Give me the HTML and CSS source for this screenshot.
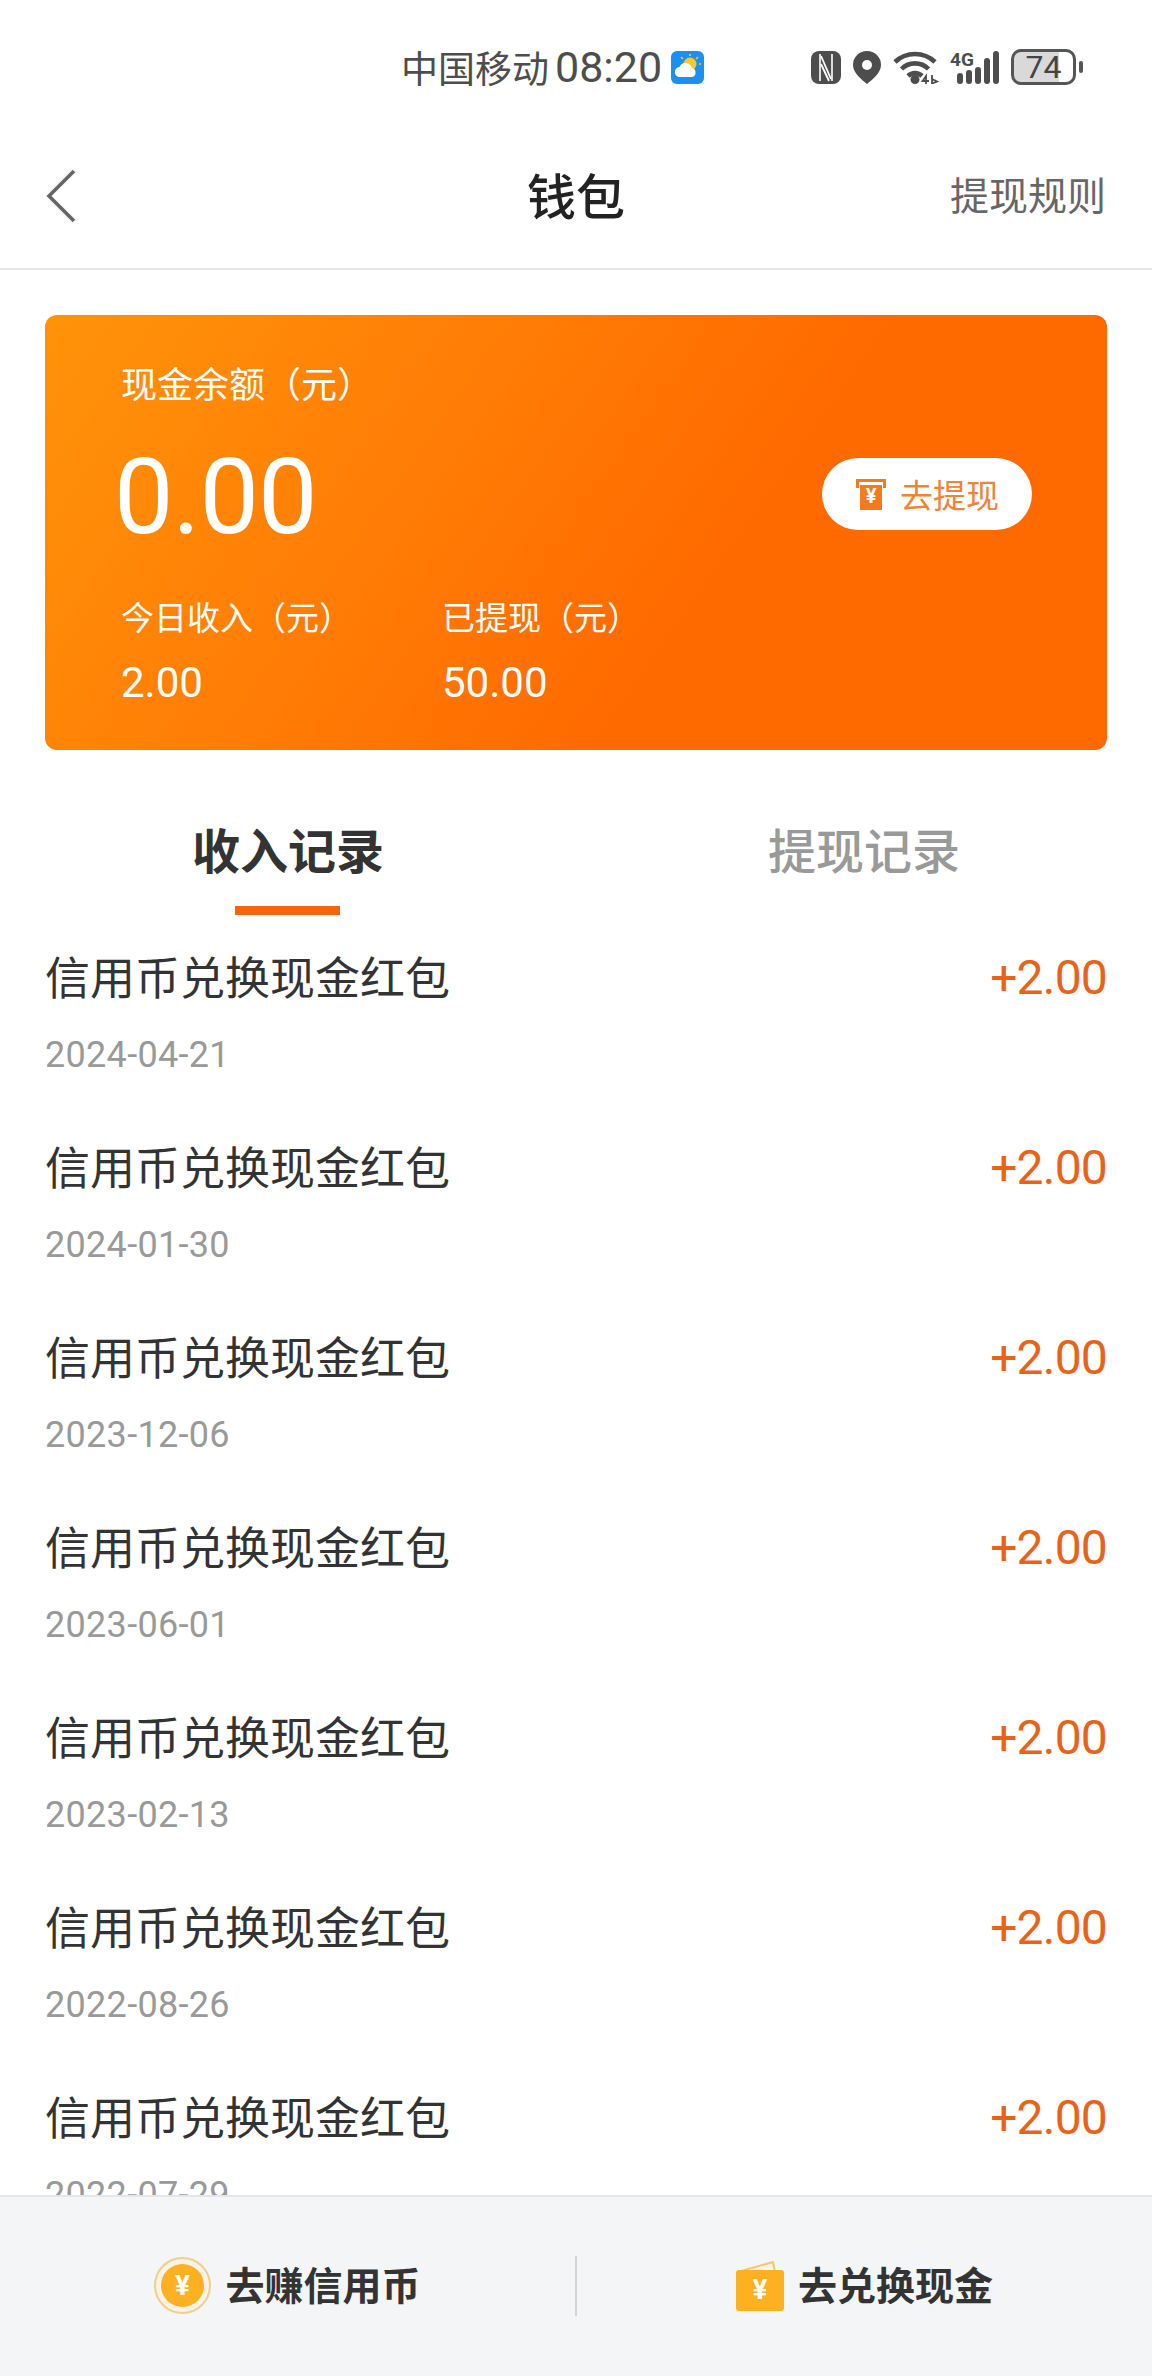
FILE: index.html
```html
<!DOCTYPE html>
<html lang="zh-CN">
<head>
    <meta charset="UTF-8">
    <meta name="viewport" content="width=device-width, initial-scale=1.0">
    <title>钱包</title>
    <link rel="stylesheet" href="styles.css">
</head>
<body>
    <div class="status-bar">
        <div class="status-left">
            <span class="carrier">中国移动</span>
            <span class="clock">08:20</span>
            <svg class="weather" width="33" height="33" viewBox="0 0 33 33">
                <rect width="33" height="33" rx="6" fill="#1c8ff0"/>
                <circle cx="19" cy="13" r="6.5" fill="#ffc62e"/>
                <path d="M19 3v2M27 6l-2 2M10 6l2 2M30 13h-2" stroke="#ffc62e" stroke-width="1.6" fill="none"/>
                <path d="M9 26a5 5 0 0 1-.5-10 6.5 6.5 0 0 1 12.3 1A4.6 4.6 0 0 1 21 26z" fill="#fff"/>
            </svg>
        </div>
        <div class="status-right">
            <svg class="nfc" width="30" height="33" viewBox="0 0 30 33">
                <rect width="30" height="33" rx="8" fill="#4d4d4d"/>
                <path d="M9 3v27M21 3v27" stroke="#fff" stroke-width="1.6" fill="none"/>
                <path d="M10 5l10 23M10 13l8 17" stroke="#fff" stroke-width="1.8" fill="none"/>
            </svg>
            <svg class="pin" width="28" height="33" viewBox="0 0 28 33">
                <path d="M14 0a14 14 0 0 1 14 14c0 8-9 15-14 19C9 29 0 22 0 14A14 14 0 0 1 14 0z" fill="#4d4d4d"/>
                <circle cx="14" cy="14" r="5" fill="#fff"/>
            </svg>
            <svg class="wifi" width="46" height="34" viewBox="0 0 46 34">
                <path d="M2 12a29 29 0 0 1 40 0M8.500 19a19 19 0 0 1 27 0M15 26a10 10 0 0 1 14 0" stroke="#4d4d4d" stroke-width="4.600" fill="none"/>
                <circle cx="22" cy="29.500" r="4.500" fill="#4d4d4d"/>
                <path d="M33 34v-8l-3.500 5H36M39 25v9M39 29l5 2.500-5 2" stroke="#4d4d4d" stroke-width="1.800" fill="none"/>
            </svg>
            <div class="signal">
                <span class="net">4G</span>
                <svg width="42" height="33" viewBox="0 0 42 33">
                    <g fill="#4d4d4d">
                        <rect x="0" y="22" width="6" height="11" rx="3"/>
                        <rect x="9" y="19" width="6" height="14" rx="3"/>
                        <rect x="18" y="16" width="6" height="17" rx="3"/>
                        <rect x="27" y="7" width="6" height="26" rx="3"/>
                        <rect x="36" y="0" width="6" height="33" rx="3"/>
                    </g>
                </svg>
            </div>
            <div class="battery">
                <div class="battery-body"><span>74</span></div>
                <div class="battery-cap"></div>
            </div>
        </div>
    </div>

    <header class="topbar">
        <svg class="back" width="30" height="54" viewBox="0 0 30 54">
            <path d="M28 2L3 27l25 25" stroke="#666" stroke-width="3.600" fill="none"/>
        </svg>
        <h1>钱包</h1>
        <a class="rules">提现规则</a>
    </header>

    <section class="card">
        <div class="card-main">
            <div>
                <p class="card-label">现金余额（元）</p>
                <p class="balance">0.00</p>
            </div>
            <button class="withdraw">
                <svg width="32" height="32" viewBox="0 0 32 32">
                    <path d="M1 1h30v9h-3V4H4v6H1z" fill="#f47a1c"/>
                    <path d="M5 7h22v25H5z" fill="#f47a1c"/>
                    <text x="16" y="25" class="yen-small">¥</text>
                </svg>
                去提现
            </button>
        </div>
        <div class="card-stats">
            <div class="stat">
                <p class="stat-label">今日收入（元）</p>
                <p class="stat-value">2.00</p>
            </div>
            <div class="stat">
                <p class="stat-label">已提现（元）</p>
                <p class="stat-value">50.00</p>
            </div>
        </div>
    </section>

    <nav class="tabs">
        <div class="tab active">收入记录</div>
        <div class="tab">提现记录</div>
    </nav>

    <ul class="records">
        <li class="record">
            <div><p class="record-title">信用币兑换现金红包</p><p class="record-date">2024-04-21</p></div>
            <span class="record-amount">+2.00</span>
        </li>
        <li class="record">
            <div><p class="record-title">信用币兑换现金红包</p><p class="record-date">2024-01-30</p></div>
            <span class="record-amount">+2.00</span>
        </li>
        <li class="record">
            <div><p class="record-title">信用币兑换现金红包</p><p class="record-date">2023-12-06</p></div>
            <span class="record-amount">+2.00</span>
        </li>
        <li class="record">
            <div><p class="record-title">信用币兑换现金红包</p><p class="record-date">2023-06-01</p></div>
            <span class="record-amount">+2.00</span>
        </li>
        <li class="record">
            <div><p class="record-title">信用币兑换现金红包</p><p class="record-date">2023-02-13</p></div>
            <span class="record-amount">+2.00</span>
        </li>
        <li class="record">
            <div><p class="record-title">信用币兑换现金红包</p><p class="record-date">2022-08-26</p></div>
            <span class="record-amount">+2.00</span>
        </li>
        <li class="record">
            <div><p class="record-title">信用币兑换现金红包</p><p class="record-date">2022-07-29</p></div>
            <span class="record-amount">+2.00</span>
        </li>
    </ul>

    <footer class="bottom">
        <a class="bottom-btn">
            <svg width="57" height="57" viewBox="0 0 57 57">
                <circle cx="28.500" cy="28.500" r="27.500" fill="#f8f3e6" stroke="#f0cf8e" stroke-width="2"/>
                <circle cx="28.500" cy="28.500" r="21.500" fill="#fdb022"/>
                <text x="28.500" y="38" class="yen">¥</text>
            </svg>
            <span class="bottom-text">去赚信用币</span>
        </a>
        <div class="bottom-divider"></div>
        <a class="bottom-btn">
            <svg width="48" height="50" viewBox="0 0 48 50">
                <path d="M2 11L37 1l2 10" fill="#f8f3e6" stroke="#f3c673" stroke-width="2"/>
                <rect y="9" width="48" height="41" rx="3" fill="#fdb022"/>
                <text x="24" y="38" class="yen">¥</text>
            </svg>
            <span class="bottom-text">去兑换现金</span>
        </a>
    </footer>
</body>
</html>
```

FILE: styles.css
```css
* {
    margin: 0;
    padding: 0;
    box-sizing: border-box;
}
html, body {
    height: 2376px;
}
body {
    font-family: Roboto, "Noto Sans CJK SC", sans-serif;
    background-color: #fff;
    display: flex;
    flex-direction: column;
    overflow: hidden;
    color: #333;
}

/* status bar */
.status-bar {
    height: 100px;
    padding: 34px 69px 0 401px;
    display: flex;
    align-items: center;
    justify-content: space-between;
    color: #4d4d4d;
}
.status-left {
    display: flex;
    align-items: center;
}
.carrier {
    font-size: 37px;
    margin-right: 6px;
}
.clock {
    font-size: 43px;
    margin-right: 9px;
}
.status-right {
    display: flex;
    align-items: center;
    gap: 12px;
}
.signal {
    position: relative;
    padding-left: 6px;
}
.signal svg {
    display: block;
}
.net {
    position: absolute;
    left: -1px;
    top: -1px;
    font-size: 19px;
    line-height: 20px;
    font-weight: 700;
}
.battery {
    display: flex;
    align-items: center;
    gap: 3px;
}
.battery-body {
    width: 65px;
    height: 36px;
    border: 3px solid #555;
    border-radius: 10px;
    background: linear-gradient(to right, #d9d9d9 76%, #fff 76%);
    text-align: center;
    font-size: 32px;
    line-height: 30px;
    color: #444;
}
.battery-cap {
    width: 4px;
    height: 12px;
    border-radius: 2px;
    background-color: #555;
}

/* top bar */
.topbar {
    height: 170px;
    flex-shrink: 0;
    padding: 24px 46px 0 46px;
    border-bottom: 2px solid #e5e5e5;
    position: relative;
    display: flex;
    align-items: center;
    justify-content: space-between;
}
.topbar h1 {
    position: absolute;
    left: 0;
    right: 0;
    margin-bottom: 6px;
    text-align: center;
    font-size: 49px;
    font-weight: 500;
    color: #222;
    pointer-events: none;
}
.rules {
    margin-bottom: 6px;
    font-size: 39px;
    color: #666;
}

/* balance card */
.card {
    margin: 45px 45px 0;
    height: 435px;
    flex-shrink: 0;
    border-radius: 12px;
    padding: 50px 75px 0 72px;
    color: #fff;
    background: linear-gradient(125deg, #ff930a 0%, #ff7b05 38%, #ff6a00 62%, #ff6a00 100%);
}
.card-main {
    display: flex;
    justify-content: space-between;
    align-items: center;
}
.card-label {
    font-size: 36px;
    line-height: 42px;
    margin-left: 4px;
}
.balance {
    margin-top: 27px;
    margin-left: -3px;
    font-size: 106px;
    line-height: 126px;
    letter-spacing: -1px;
}
.withdraw {
    width: 210px;
    height: 72px;
    margin-top: 63px;
    border: none;
    border-radius: 36px;
    background-color: #fff;
    color: #f08336;
    font-family: inherit;
    font-size: 33px;
    display: flex;
    align-items: center;
    justify-content: center;
    gap: 13px;
}
.yen-small {
    font-size: 20px;
    font-weight: 700;
    fill: #fff;
    text-anchor: middle;
}
.card-stats {
    display: flex;
    margin-top: 39px;
    padding-left: 4px;
}
.stat {
    width: 321px;
}
.stat-label {
    font-size: 33px;
    line-height: 40px;
}
.stat-value {
    margin-top: 19px;
    font-size: 42px;
    line-height: 50px;
}

/* tabs */
.tabs {
    display: flex;
    height: 165px;
    flex-shrink: 0;
}
.tab {
    flex: 1;
    text-align: center;
    padding-top: 71px;
    font-size: 48px;
    line-height: 64px;
    font-weight: 500;
    color: #999;
    position: relative;
}
.tab.active {
    color: #333;
    font-weight: 700;
}
.tab.active::after {
    content: "";
    position: absolute;
    left: 235px;
    bottom: 0;
    width: 105px;
    height: 9px;
    background-color: #f5650f;
}

/* list */
.records {
    list-style: none;
    flex: 1;
    overflow: hidden;
    padding: 0 45px;
}
.record {
    height: 190px;
    padding-top: 33px;
    display: flex;
    justify-content: space-between;
    align-items: flex-start;
}
.record-title {
    margin-top: 2px;
    font-size: 45px;
    line-height: 60px;
    color: #333;
}
.record-date {
    margin-top: 27px;
    font-size: 36px;
    line-height: 36px;
    letter-spacing: 0.3px;
    color: #999;
}
.record-amount {
    font-size: 48px;
    line-height: 60px;
    letter-spacing: -0.8px;
    color: #e8631a;
}

/* bottom actions */
.bottom {
    height: 181px;
    flex-shrink: 0;
    background-color: #f4f5f7;
    border-top: 2px solid #e4e6e9;
    display: flex;
    align-items: center;
    padding-bottom: 2px;
}
.bottom-btn {
    flex: 1;
    display: flex;
    align-items: center;
    justify-content: center;
    gap: 14px;
    font-size: 39px;
    font-weight: 700;
    color: #333;
}
.bottom-text {
    margin-bottom: 5px;
}
.bottom-divider {
    width: 2px;
    height: 60px;
    background-color: #d2d4d6;
}
.yen {
    font-size: 28px;
    font-weight: 700;
    fill: #fff;
    text-anchor: middle;
}
```
